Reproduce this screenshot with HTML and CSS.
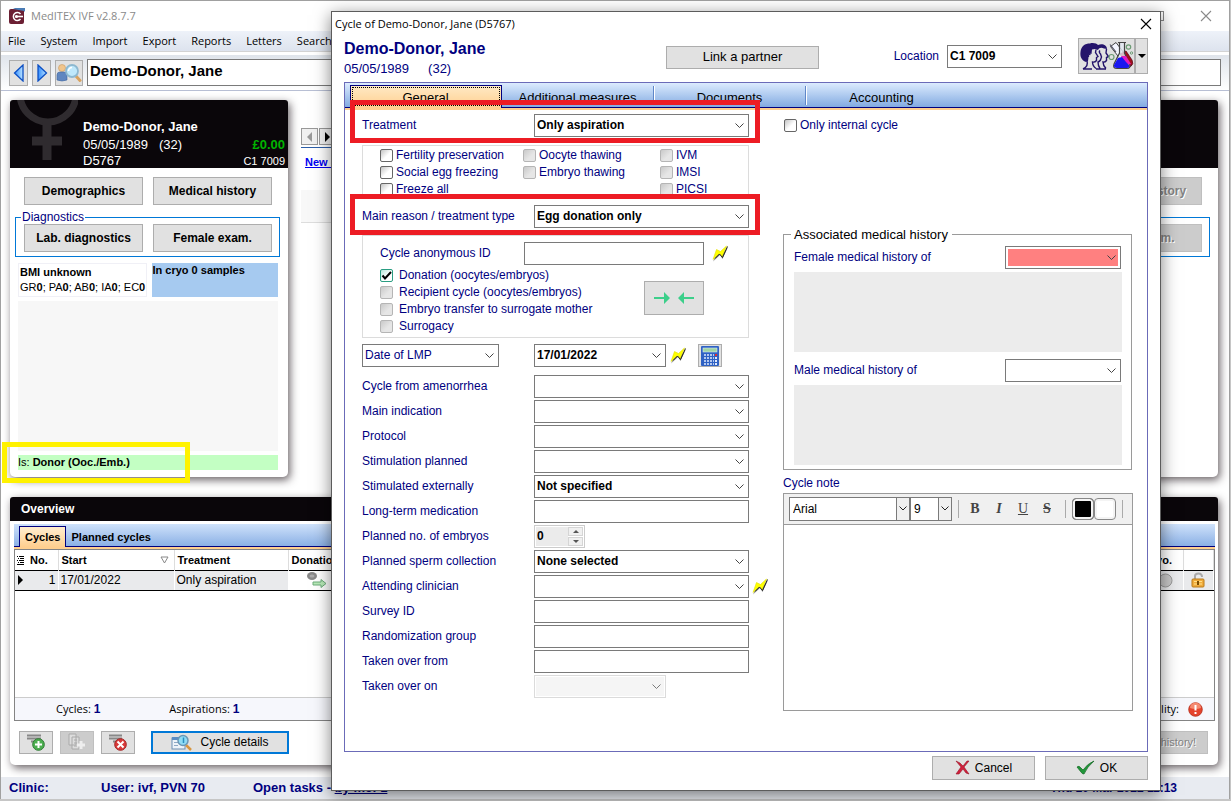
FILE: index.html
```html
<!DOCTYPE html>
<html lang="en">
<head>
<meta charset="utf-8">
<title>MedITEX IVF</title>
<link rel="stylesheet" href="styles.css">
</head>
<body>
<svg class="defs" aria-hidden="true">
  <symbol id="bolt" viewBox="0 0 17 17">
    <path d="M16 2L10.500 14L8 10L1 16.500L6 7.500L9 11Z" fill="#555" opacity=".7"/>
    <path d="M14.500 1L10 12L7.500 8.500L1 14.500L4.500 4.500L8.500 6.500Z" fill="#ffff00" stroke="#e0e000" stroke-width=".6"/>
    <path d="M15.500 1.500L10.500 12.500L7.500 9L3 13.500" fill="none" stroke="#222" stroke-width="1"/>
  </symbol>
  <symbol id="close" viewBox="0 0 12 12"><path d="M1 1L11 11M11 1L1 11" fill="none" stroke="currentColor" stroke-width="1.100"/></symbol>
</svg>

<div class="window">
  <header class="titlebar">
    <svg class="logo" width="16" height="16" viewBox="0 0 16 16"><rect x="0" y="1" width="15" height="15" rx="2" fill="#6b1f33"/><path d="M4 1L6 0H16V4L15 3Z" fill="#4a7cb5"/><path d="M11.500 6A4 4 0 1 0 11.500 11" fill="none" stroke="#fff" stroke-width="1.500"/><path d="M6 8.500H14" stroke="#fff" stroke-width="1.600"/><circle cx="7.500" cy="8.500" r="1.500" fill="#fff"/></svg>
    <span class="title">MedITEX IVF v2.8.7.7</span>
    <svg class="sys" width="10" height="10" viewBox="0 0 10 10"><rect x=".5" y=".5" width="9" height="9" fill="none" stroke="#888"/></svg>
    <svg class="sys" width="12" height="12"><use href="#close"/></svg>
  </header>
  <nav class="menubar">
    <a href="#">File</a><a href="#">System</a><a href="#">Import</a><a href="#">Export</a><a href="#">Reports</a><a href="#">Letters</a><a href="#">Search</a>
  </nav>
  <div class="toolbar">
    <button class="tool" aria-label="Previous"><svg width="12" height="18" viewBox="0 0 12 18"><defs><linearGradient id="bl"><stop offset="0" stop-color="#2f8bff"/><stop offset="1" stop-color="#bfe6ff"/></linearGradient></defs><path d="M10 1V17L1.500 9Z" fill="url(#bl)" stroke="#0b4fc4" stroke-width="1.300"/></svg></button>
    <button class="tool" aria-label="Next"><svg width="12" height="18" viewBox="0 0 12 18"><path d="M2 1V17L10.500 9Z" fill="url(#bl)" stroke="#0b4fc4" stroke-width="1.300"/></svg></button>
    <button class="tool wide" aria-label="Find patient"><svg width="26" height="20" viewBox="0 0 26 20"><circle cx="6" cy="5" r="3.500" fill="#f1c58c" stroke="#c99a5c" stroke-width=".6"/><path d="M1 17V12Q1 9 4 9H8Q11 9 11 12V17Q6 19 1 17Z" fill="#5f86c0" stroke="#3f66a0" stroke-width=".6"/><path d="M19 12L24 17.500" stroke="#d9a35f" stroke-width="3" stroke-linecap="round"/><circle cx="16" cy="8" r="6" fill="#bfe8fb" stroke="#8db8d0" stroke-width="1.800"/><path d="M12.500 8A3.500 3.500 0 0 1 16 4.500" stroke="#fff" stroke-width="1.500" fill="none"/></svg></button>
    <input class="patient-box" type="text" value="Demo-Donor, Jane" aria-label="Patient">
  </div>

  <main class="workspace">
    <div class="top-row">
      <section class="card patient">
        <div class="card-head">
          <svg class="venus" width="68" height="68" viewBox="0 0 68 68"><circle cx="38" cy="-6" r="28" fill="none" stroke="#2f2b2f" stroke-width="7"/><path d="M37 22V60M22 41H52" stroke="#2f2b2f" stroke-width="9" fill="none"/></svg>
          <div class="ident">
            <strong>Demo-Donor, Jane</strong>
            <div class="ident-line"><span>05/05/1989 &nbsp; (32)</span><b class="money">£0.00</b></div>
            <div class="ident-line low"><span>D5767</span><small>C1 7009</small></div>
          </div>
        </div>
        <div class="pair"><button class="btn strong">Demographics</button><button class="btn strong">Medical history</button></div>
        <fieldset class="diag"><legend>Diagnostics</legend>
          <button class="btn strong">Lab. diagnostics</button><button class="btn strong">Female exam.</button>
        </fieldset>
        <div class="facts">
          <div class="bmi"><b>BMI unknown</b><br>GR<b>0</b>; PA<b>0</b>; AB<b>0</b>; IA<b>0</b>; EC<b>0</b></div>
          <div class="cryo">In cryo 0 samples</div>
        </div>
        <div class="memo"></div>
        <div class="donor">Is: <b>Donor (Ooc./Emb.)</b></div>
      </section>
      <section class="timeline">
        <div class="steps">
          <button class="step" aria-label="Back"><svg width="7" height="10"><path d="M6 0V10L1 5Z" fill="#999"/></svg></button>
          <button class="step" aria-label="Forward"><svg width="7" height="10"><path d="M1 0V10L6 5Z" fill="#000"/></svg></button>
        </div>
        <a class="new-link" href="#">New cycle</a>
        <div class="slot"></div>
      </section>
      <section class="card patient partner">
        <div class="card-head"></div>
        <div class="pair"><button class="btn strong" disabled>Demographics</button><button class="btn strong" disabled>Medical history</button></div>
        <fieldset class="diag"><legend>Diagnostics</legend>
          <button class="btn strong" disabled>Lab. diagnostics</button><button class="btn strong" disabled>Male exam.</button>
        </fieldset>
      </section>
    </div>

    <section class="card overview">
      <h2>Overview</h2>
      <div class="grid-area">
        <div class="mini-tabs"><button class="mini-tab active">Cycles</button><button class="mini-tab">Planned cycles</button></div>
        <div class="grid-frame">
          <table class="cycles">
            <colgroup><col class="c-mark"><col class="c-no"><col class="c-start"><col class="c-treat"><col class="c-don"><col><col class="c-cryo"><col class="c-lock"></colgroup>
            <thead><tr><th><svg width="8" height="10" viewBox="0 0 8 10"><path d="M0 1.500H1M2 1.500H7M1 3.500H2M3 3.500H7M0 5.500H1M2 5.500H7M1 7.500H2M3 7.500H7M0 9.500H7" stroke="#000"/></svg></th><th>No.</th><th>Start<svg class="sort" width="9" height="8"><path d="M1 1H8L4.500 7Z" fill="none" stroke="#888"/></svg></th><th>Treatment</th><th>Donation</th><th></th><th class="num">Cryo.</th><th></th></tr></thead>
            <tbody><tr><td><svg width="6" height="10"><path d="M1 0V10L6 5Z"/></svg></td><td class="num">1</td><td>17/01/2022</td><td>Only aspiration</td>
              <td class="don"><svg width="24" height="18" viewBox="0 0 24 18"><ellipse cx="9" cy="5" rx="5" ry="4" fill="#888"/><ellipse cx="9" cy="5" rx="2.500" ry="1.500" fill="#aaa"/><path d="M10 11H18V8.500L23 12.500L18 16.500V14H10Z" fill="#b7eab7" stroke="#6dab7a"/></svg></td><td></td>
              <td class="num"><svg width="15" height="15"><circle cx="7.500" cy="7.500" r="6.500" fill="#c8c8c8" stroke="#999"/></svg></td>
              <td class="lock"><svg width="14" height="16" viewBox="0 0 14 16"><path d="M4 7V4Q4 1.500 7.500 1.500Q11 1.500 11 5" fill="none" stroke="#aaa" stroke-width="2"/><rect x="1" y="7" width="12" height="8" rx="1" fill="#f0ac3c" stroke="#b97a18"/><path d="M3 9.500H11M3 12H11" stroke="#ffe08a"/><path d="M7 9V13" stroke="#7c4d00" stroke-width="2"/></svg></td></tr></tbody>
          </table>
          <div class="totals"><span>Cycles: <b>1</b></span><span>Aspirations: <b>1</b></span><span class="quality">Data quality: <svg width="15" height="15" viewBox="0 0 15 15"><circle cx="7.500" cy="7.500" r="6.800" fill="#e5432c" stroke="#b32a18" stroke-width=".8"/><path d="M2 6A5.500 5.500 0 0 1 13 6Q7.500 8 2 6" fill="#f58a70"/><path d="M7.500 3V8.500M7.500 10V12" stroke="#fff" stroke-width="2"/></svg></span></div>
        </div>
      </div>
      <div class="actions">
        <button class="btn act" aria-label="Add"><svg width="20" height="18" viewBox="0 0 20 18"><path d="M1 2.500H15M1 5.500H15M5 8.500H10" stroke="#888" stroke-width="2"/><circle cx="12.500" cy="11.500" r="5.800" fill="#4caf50" stroke="#2c7a30"/><path d="M12.500 8V15M9 11.500H16" stroke="#fff" stroke-width="2"/></svg></button>
        <button class="btn act" aria-label="Copy" disabled><svg width="20" height="18" viewBox="0 0 20 18"><path d="M2 1H9V12H2ZM5 4H12V16H5Z" fill="#ddd" stroke="#aaa"/><path d="M7 7H10M7 10H10M7 13H10" stroke="#aaa"/><path d="M14 8V16M10 12H18" stroke="#eee" stroke-width="3"/></svg></button>
        <button class="btn act" aria-label="Delete"><svg width="20" height="18" viewBox="0 0 20 18"><path d="M1 2.500H14M1 5.500H14M5 8.500H10" stroke="#888" stroke-width="2"/><circle cx="12.500" cy="11.500" r="5.800" fill="#d93a3a" stroke="#a12323"/><path d="M9.500 8.500L15.500 14.500M15.500 8.500L9.500 14.500" stroke="#fff" stroke-width="2"/></svg></button>
        <button class="btn details"><svg width="22" height="17" viewBox="0 0 22 17"><rect x="1" y="4" width="13" height="11" fill="#eef3f8" stroke="#6d8fb3"/><rect x="1" y="3" width="13" height="3" fill="#5b8dc4"/><path d="M3 8.500H7M3 11.500H7" stroke="#8fa9c4"/><path d="M15 11L20 16" stroke="#d9963f" stroke-width="2.500"/><circle cx="12" cy="6.500" r="5" fill="#8fdcf5" stroke="#6b96b5" stroke-width="1.500"/><path d="M12.500 3.500V9" stroke="#2a8fc0" stroke-width="1.500"/></svg>Cycle details</button>
        <button class="btn history" disabled>Treatment history!</button>
      </div>
    </section>
  </main>

  <footer class="statusbar"><span class="s-clinic">Clinic:</span><span class="s-user">User: ivf, PVN 70</span><span>Open tasks - <a href="#">by me: 1</a></span><time>Thu 10 Mar 2022 11:13</time></footer>
</div>

<div class="dialog" role="dialog" aria-labelledby="dlg-title">
  <div class="dlg-title"><span id="dlg-title">Cycle of Demo-Donor, Jane (D5767)</span><button class="plain" aria-label="Close"><svg width="12" height="12"><use href="#close"/></svg></button></div>
  <div class="dlg-head">
    <div class="dlg-ident"><h1>Demo-Donor, Jane</h1><p><span>05/05/1989</span><span>(32)</span></p></div>
    <button class="btn link">Link a partner</button>
    <div class="location"><label for="loc">Location</label><select id="loc" class="field bold"><option>C1 7009</option></select></div>
    <div class="split">
      <button class="btn main" aria-label="Couple and laboratory"><svg width="54" height="32" viewBox="0 0 54 32">
        <path d="M6 22C1 20 0 16 0.500 12C1 6 5 3.500 10 3.500C13 2.500 17 3.500 18 5C22 3 27 5 27 9L24 8.500C21 7 19 8 18 10L15 9L12 9.500L11.500 14C9 13 7.500 15 8.500 17.500L8 21Z" fill="#24146b"/>
        <path d="M7 21C8 24 7 27 3 29M8.500 17Q8 13.500 10.500 14.500M16 9.500L15.500 12.500L18 16.500L16.500 17.500L16.500 20.500Q15 22.500 12.500 22C12.500 25 14 27 16 28.500M26.500 9L26 13L28.500 16.500L26.500 17.500L26.500 20.500Q25 22.500 23 22C23 25 24.500 27 26 28.500M20 10.500Q18.500 12 20.500 14L21.500 17L20.500 20Q19.500 21.500 18 22Q18 26 20 28.500M3 29H12M16 29H26" fill="none" stroke="#24146b" stroke-width="1.400"/>
        <path d="M30.500 6.500L36 2.500L50 21L52 24Q52 27 48 27L45 25Z" fill="#f4f6ff" stroke="#444"/>
        <path d="M40 14L46 11L52 20Q54 24 51 26L47 25Z" fill="#a3101c" stroke="#5a0d20" stroke-width=".8"/>
        <path d="M38 2.500H46M39.500 2.500V13L34 24Q32.500 28.500 37 28.500H47Q51 28.500 49.500 24L44.500 13V2.500" fill="#e4e8f2" fill-opacity=".8" stroke="#444" stroke-width="1.200"/>
        <path d="M41 16L46 16L51 24L46 25Z" fill="#e51cc0"/>
        <path d="M38 18L34 25Q33.500 28 37 28H47Q50 28 49 25L46 22L42 17Z" fill="#1a18f0"/>
        <path d="M30 4.500L36 12" stroke="#556" stroke-width="1.200"/>
        <circle cx="31.500" cy="17" r="2.500" fill="none" stroke="#6c9c74" stroke-width="1.200"/><circle cx="48.500" cy="7" r="2.200" fill="none" stroke="#6c9c74" stroke-width="1.200"/><circle cx="51.500" cy="13" r="1.200" fill="none" stroke="#6c9c74"/></svg></button>
      <button class="btn drop" aria-label="More"><svg width="8" height="4"><path d="M0 0H8L4 4Z"/></svg></button>
    </div>
  </div>

  <div class="page">
    <div class="tabs" role="tablist"><button class="tab active" role="tab">General</button><button class="tab" role="tab">Additional measures</button><button class="tab" role="tab">Documents</button><button class="tab" role="tab">Accounting</button></div>
    <div class="cols">
      <form class="left">
        <div class="row marked"><label for="treat">Treatment</label><select id="treat" class="field bold"><option>Only aspiration</option></select></div>
        <div class="box options">
          <label class="check"><input type="checkbox">Fertility preservation</label><label class="check"><input type="checkbox" disabled>Oocyte thawing</label><label class="check"><input type="checkbox" disabled>IVM</label>
          <label class="check"><input type="checkbox">Social egg freezing</label><label class="check"><input type="checkbox" disabled>Embryo thawing</label><label class="check"><input type="checkbox" disabled>IMSI</label>
          <label class="check"><input type="checkbox">Freeze all</label><span></span><label class="check"><input type="checkbox" disabled>PICSI</label>
        </div>
        <div class="row marked"><label for="reason">Main reason / treatment type</label><select id="reason" class="field bold"><option>Egg donation only</option></select></div>
        <div class="box donation">
          <div class="anon"><label for="anon">Cycle anonymous ID</label><input id="anon" class="field" type="text"><svg width="17" height="17"><use href="#bolt"/></svg></div>
          <div class="kind">
            <div class="kinds">
              <label class="check"><input type="checkbox" checked>Donation (oocytes/embryos)</label>
              <label class="check"><input type="checkbox" disabled>Recipient cycle (oocytes/embryos)</label>
              <label class="check"><input type="checkbox" disabled>Embryo transfer to surrogate mother</label>
              <label class="check"><input type="checkbox" disabled>Surrogacy</label>
            </div>
            <button type="button" class="btn arrows" aria-label="Match"><svg width="42" height="14" viewBox="0 0 42 14"><path d="M1 7H12M41 7H30" stroke="#3ccf8a" stroke-width="2"/><path d="M11 1L17 7L11 13ZM31 1L25 7L31 13Z" fill="#3ccf8a"/></svg></button>
          </div>
        </div>
        <div class="row lmp"><select class="field lmp-kind" aria-label="Date kind"><option>Date of LMP</option></select>
          <div class="lmp-date"><input class="field bold picker" type="text" value="17/01/2022" aria-label="Date"><svg width="17" height="17"><use href="#bolt"/></svg>
          <button type="button" class="btn calc" aria-label="Calculator"><svg width="18" height="20" viewBox="0 0 18 20"><rect width="18" height="20" rx="1" fill="#2f62c4"/><rect x="2" y="2" width="14" height="4" fill="#9fd3a4" stroke="#d6e6f5" stroke-width=".6"/><path d="M3 9H13M3 12H13M3 15H13M3 18H13" stroke="#dfe9fb" stroke-width="1.600" stroke-dasharray="2 1"/><rect x="14" y="8" width="2" height="2" fill="#e03030"/><path d="M15 11V19" stroke="#dfe9fb" stroke-width="2" stroke-dasharray="2 1"/></svg></button></div></div>
        <div class="rows">
          <div class="row"><label for="f1">Cycle from amenorrhea</label><select id="f1" class="field"><option></option></select></div>
          <div class="row"><label for="f2">Main indication</label><select id="f2" class="field"><option></option></select></div>
          <div class="row"><label for="f3">Protocol</label><select id="f3" class="field"><option></option></select></div>
          <div class="row"><label for="f4">Stimulation planned</label><select id="f4" class="field"><option></option></select></div>
          <div class="row"><label for="f5">Stimulated externally</label><select id="f5" class="field bold"><option>Not specified</option></select></div>
          <div class="row"><label for="f6">Long-term medication</label><input id="f6" class="field" type="text"></div>
          <div class="row"><label for="f7">Planned no. of embryos</label><div class="spin"><input id="f7" type="text" value="0" disabled><div class="spin-btns"><button type="button" disabled aria-label="Up"><svg width="6" height="3"><path d="M0 3H6L3 0Z" fill="#555"/></svg></button><button type="button" disabled aria-label="Down"><svg width="6" height="3"><path d="M0 0H6L3 3Z" fill="#555"/></svg></button></div></div></div>
          <div class="row"><label for="f8">Planned sperm collection</label><select id="f8" class="field bold"><option>None selected</option></select></div>
          <div class="row"><label for="f9">Attending clinician</label><select id="f9" class="field"><option></option></select><svg width="17" height="17"><use href="#bolt"/></svg></div>
          <div class="row"><label for="f10">Survey ID</label><input id="f10" class="field" type="text"></div>
          <div class="row"><label for="f11">Randomization group</label><input id="f11" class="field" type="text"></div>
          <div class="row"><label for="f12">Taken over from</label><input id="f12" class="field" type="text"></div>
          <div class="row"><label for="f13">Taken over on</label><select id="f13" class="field short" disabled><option></option></select></div>
        </div>
      </form>
      <div class="right">
        <label class="check internal"><input type="checkbox">Only internal cycle</label>
        <fieldset class="assoc"><legend>Associated medical history</legend>
          <div class="hist"><label for="fem">Female medical history of</label><select id="fem" class="field alert"><option></option></select></div>
          <textarea aria-label="Female medical history" readonly></textarea>
          <div class="hist"><label for="mal">Male medical history of</label><select id="mal" class="field"><option></option></select></div>
          <textarea aria-label="Male medical history" readonly></textarea>
        </fieldset>
        <label class="note-label" for="note">Cycle note</label>
        <div class="editor">
          <div class="ed-bar">
            <select class="ed-sel font" aria-label="Font"><option>Arial</option></select><select class="ed-sel size" aria-label="Size"><option>9</option></select>
            <i class="sep"></i>
            <button class="fmt"><b>B</b></button><button class="fmt"><b><em>I</em></b></button><button class="fmt"><u>U</u></button><button class="fmt"><b><s>S</s></b></button>
            <i class="sep"></i>
            <button class="swatch black" aria-label="Text colour"></button><button class="swatch" aria-label="Background colour"></button>
            <i class="sep"></i>
          </div>
          <textarea id="note"></textarea>
        </div>
      </div>
    </div>
  </div>
  <div class="dlg-foot">
    <button class="btn foot"><svg width="15" height="15" viewBox="0 0 15 15"><path d="M1 1L5 3L8 6L12 1L14 1L9 7L14 14L11 13L8 9L4 14L1 14L6 7Z" fill="#d0203c" stroke="#971427" stroke-width=".6"/></svg>Cancel</button>
    <button class="btn foot"><svg width="19" height="15" viewBox="0 0 19 15"><path d="M1 7Q3 5 5 8L7 10Q11 4 18 1Q11 7 8 14Q6 14 5 12Z" fill="#20963a" stroke="#10661f" stroke-width=".7"/></svg>OK</button>
  </div>
</div>
</body>
</html>
```
FILE: styles.css
```css
*, *::before, *::after { box-sizing: border-box; }
html, body { height: 100%; }
body { margin: 0; position: relative; overflow: hidden; background: #c6c6c6; color: #000; font: 12px/16px "Liberation Sans", Arial, sans-serif; }
button, input, select, textarea { font: inherit; color: inherit; margin: 0; border-radius: 0; }
h1, h2, p { margin: 0; font-size: inherit; }
svg { display: block; flex: none; }
.defs { position: absolute; width: 0; height: 0; }

.btn { display: flex; align-items: center; justify-content: center; padding: 0 0 1px; background: #e1e1e1; border: 1px solid #adadad; }
.btn:disabled { background: #ccc; border-color: #bfbfbf; color: #838383; text-shadow: 1px 1px #fff; }
.strong { font-weight: bold; }
.plain { border: 0; background: none; padding: 0; }

/* application window */
.window { height: calc(100% - 2px); margin-right: 1px; display: flex; flex-direction: column; border: 1px solid #a0a0a0; border-bottom: 0; background: #fff; }
.titlebar { flex: none; height: 30px; display: flex; align-items: center; gap: 6px; padding: 0 17px 0 8px; color: #8a8a8a; font: 11px/16px "Open Sans", sans-serif; }
.title { margin-right: auto; }
.sys { margin-left: 30px; }
.menubar { flex: none; height: 21px; display: flex; gap: 15px; padding-left: 7px; font: 11px/20px "Open Sans", sans-serif; background: linear-gradient(#eef2f9, #dde3ee); border-bottom: 1px solid #d3d3d3; }
.menubar a { color: #000; text-decoration: none; }
.toolbar { flex: none; height: 36px; margin-top: 3px; display: flex; align-items: center; gap: 4px; padding: 0 8px; background: linear-gradient(#dfe4eb, #fff); border-bottom: 1px solid #b8bfd4; }
.tool { width: 19px; height: 26px; padding: 0; display: flex; align-items: center; justify-content: center; background: #e1e1e1; border: 1px solid #adadad; }
.wide { width: 28px; }
.patient-box { flex: 1; height: 27px; padding: 0 2px 4px; border: 1px solid #7a7a7a; font-weight: bold; font-size: 15px; background: #fff; }

.workspace { flex: 1; min-height: 0; display: flex; flex-direction: column; gap: 20px; padding: 9px 11px 12px 9px; }
.top-row { display: flex; gap: 13px; }
.card { background: #fff; border-radius: 3px 3px 5px 5px; box-shadow: 2px 3px 8px rgba(40, 30, 35, .7); }
.patient { flex: none; width: 278px; height: 377px; display: flex; flex-direction: column; }
.card-head { flex: none; height: 68px; position: relative; display: flex; padding: 18px 3px 0 73px; background: #0a060a; color: #fff; border-radius: 3px 3px 0 0; overflow: hidden; }
.venus { position: absolute; left: 0; top: 0; }
.ident { flex: 1; font-size: 13px; line-height: 18px; position: relative; }
.ident strong { display: block; }
.ident-line { display: flex; justify-content: space-between; }
.low { line-height: 14px; }
.low small { font-size: 11px; }
.money { color: #00b400; }
.pair { display: flex; gap: 10px; padding: 9px 16px 5px 14px; }
.pair .btn, .diag .btn { flex: 1; height: 28px; }
.diag { display: flex; gap: 10px; margin: 0 8px 0 5px; padding: 0 7px 4px 8px; border: 1px solid #0078d7; min-width: 0; }
.diag legend { margin-left: -3px; padding: 0 1px; color: #00007f; line-height: 14px; }
.facts { display: flex; gap: 5px; margin: 6px 10px 0 8px; font-size: 11px; line-height: 15px; }
.facts > div { flex: 1; height: 34px; white-space: nowrap; }
.bmi { border: 1px solid #f0f0f6; padding: 1px 0 0 1px; }
.cryo { background: #a6caf0; font-weight: bold; padding-left: 1px; }
.memo { flex: 1; margin: 4px 10px 4px 8px; background: #f7f7f7; }
.donor { position: relative; margin: 0 10px 7px 8px; background: #c3ffc3; font-size: 11px; line-height: 15px; }
.donor::after { content: ""; position: absolute; left: -16px; top: -13px; width: 188px; height: 41px; border: 5px solid #fff200; }

.timeline { flex: 1; min-width: 0; padding-top: 28px; }
.steps { display: flex; gap: 1px; padding-bottom: 2px; border-bottom: 1px solid #2d5fa8; }
.step { width: 17px; height: 17px; padding: 0; display: flex; align-items: center; justify-content: center; background: #f0f0f0; border: 1px solid #999; }
.new-link { display: block; margin: 6px 4px 20px; color: #0000f0; font-weight: bold; font-size: 11px; }
.slot { height: 33px; background: #f8f8f8; border-bottom: 1px solid #ddd; }

.overview { flex: 1; min-height: 0; display: flex; flex-direction: column; }
.overview h2 { flex: none; height: 24px; padding-left: 11px; background: #0a060a; color: #fff; line-height: 25px; border-radius: 3px 3px 0 0; }
.grid-area { flex: 1; display: flex; flex-direction: column; margin: 3px 3px 0 4px; }
.mini-tabs { flex: none; display: flex; height: 25px; padding: 2px 0 0 5px; background: linear-gradient(#cfe2fb, #88aee4); border-bottom: 2px solid #ffcf8f; box-shadow: inset 0 -1px #00007f; }
.mini-tab { padding: 0 5px; border: 0; background: none; font-weight: bold; font-size: 11px; }
.mini-tab.active { background: linear-gradient(#ffeed0, #ffcf8f); border: 1px solid #00007f; border-bottom: 0; }
.grid-frame { flex: 1; display: flex; flex-direction: column; border: 1px solid #848484; }
.cycles { width: 100%; table-layout: fixed; border-collapse: collapse; }
.c-mark { width: 12px; } .c-no { width: 31px; } .c-start { width: 116px; } .c-treat { width: 114px; } .c-don { width: 60px; } .c-cryo { width: 60px; } .c-lock { width: 30px; }
.cycles th { height: 20px; padding: 0 3px; text-align: left; font-size: 11px; white-space: nowrap; border-right: 1px solid #ddd; }
.cycles th:first-child, .cycles td:first-child { padding: 0 0 0 2px; border-right: 0; }
.cycles td { height: 20px; padding: 0 2px; background: #e9eaec; border-top: 1px solid #000; border-bottom: 1px solid #000; border-right: 1px solid #fff; }
.cycles .num { text-align: right; }
.cycles th.num { padding-right: 11px; }
.cycles .num svg { margin-left: auto; margin-right: 8px; }
.cycles td.don { background: #fff; padding-left: 14px; }
.cycles td.lock { padding-left: 7px; }
.sort { float: right; margin: 4px 2px 0 0; }
.totals { margin-top: auto; height: 23px; display: flex; align-items: center; padding: 0 11px 0 41px; gap: 69px; background: #f6f7fc; border-top: 1px solid #ccc; font: 11px/16px "Open Sans", sans-serif; }
.totals b { font: bold 12px "Liberation Sans", sans-serif; color: #00007f; }
.quality { margin-left: auto; display: flex; gap: 9px; align-items: center; }
.actions { flex: none; display: flex; align-items: center; gap: 7px; padding: 10px 10px 11px 9px; }
.act { width: 34px; height: 23px; }
.details { width: 138px; height: 23px; gap: 7px; margin-left: 9px; border: 2px solid #0078d7; }
.history { margin-left: auto; width: 112px; height: 23px; font-size: 11px; }

.statusbar { flex: none; height: 22px; display: flex; padding: 0 52px 0 8px; background: #e8ebf1; color: #00007f; font-weight: bold; font-size: 13px; line-height: 22px; }
.statusbar a { color: inherit; }
.statusbar time { margin-left: auto; font-size: 12px; }
.s-clinic { width: 92px; } .s-user { width: 152px; }

/* dialog */
.dialog { position: absolute; left: 331px; right: 70px; top: 11px; bottom: 10px; display: flex; flex-direction: column; background: #fff; border: 1px solid #5c5c5c; box-shadow: 0 4px 16px rgba(0, 0, 0, .5); color: #00007f; }
.dlg-title { flex: none; height: 24px; display: flex; justify-content: space-between; align-items: center; padding: 0 8px 0 3px; color: #000; font: 11px/16px "Open Sans", sans-serif; }
.dlg-head { flex: none; height: 46px; display: flex; align-items: flex-start; padding: 0 12px; }
.dlg-ident { width: 322px; padding-top: 3px; }
.dlg-ident h1 { font-size: 16px; line-height: 20px; }
.dlg-ident p { display: flex; gap: 19px; padding: 1px 0; font-size: 13px; line-height: 18px; }
.link { width: 153px; height: 23px; margin-top: 10px; font-size: 13px; color: #000; }
.location { margin: 9px 16px 0 auto; display: flex; align-items: center; gap: 8px; }
.location .field { width: 115px; }
.split { display: flex; height: 36px; margin-top: 2px; }
.main { width: 58px; border-right-width: 2px; }
.drop { width: 12px; border-left: 0; }

.field { width: 100%; min-width: 0; height: 23px; padding: 0 2px 1px; border: 1px solid #7a7a7a; background-color: #fff; appearance: none; }
select.field, .picker { padding-right: 18px; background-repeat: no-repeat; background-position: right 4px center; background-image: url("data:image/svg+xml,%3Csvg xmlns='http://www.w3.org/2000/svg' width='9' height='6'%3E%3Cpath d='M.5 .5L4.500 4.500L8.500 .5' fill='none' stroke='%23444'/%3E%3C/svg%3E"); }
select.field:disabled { background-color: #f2f2f2; border-color: #ccc; box-shadow: inset 0 0 0 1px #fff; }
.bold { font-weight: bold; color: #000; }

.page { flex: 1; min-height: 0; margin: 0 12px; display: flex; flex-direction: column; border: 1px solid #6b6bb8; }
.tabs { flex: none; display: flex; height: 27px; padding: 2px 0 0 5px; background: linear-gradient(#dcebfe, #7fa8e0); border-bottom: 2px solid #ffcf8f; box-shadow: inset 0 -1px #00007f; }
.tab { position: relative; width: 152px; padding: 3px 1px 0 0; border: 0; background: none; font-size: 13px; line-height: 16px; color: #000; }
.tab:nth-child(n+2):nth-child(-n+3)::after { content: ""; position: absolute; right: -1px; top: 1px; height: 19px; border-left: 1px solid #5f87c8; border-right: 1px solid #fff; }
.tab.active { background: linear-gradient(#ffe9c4, #ffcf8f); border: 1px solid #00007f; border-bottom: 0; outline: 1px dotted #000; outline-offset: -3px; padding-top: 2px; }
.cols { flex: 1; min-height: 0; display: grid; grid-template-columns: minmax(0, 407fr) minmax(0, 350fr); gap: 14px; padding: 0 14px 0 17px; }
.left { padding-top: 4px; }
.row { position: relative; display: grid; grid-template-columns: 172px minmax(0, 1fr) 20px; align-items: center; min-height: 23px; }
.row > label, .anon > label, .hist > label, .location > label { padding-bottom: 2px; }
.row > svg { margin-left: 3px; }
.marked { z-index: 1; }
.marked::after { content: ""; position: absolute; left: -12px; right: 9px; top: -14px; bottom: -6px; border: 5px solid #ed1c24; pointer-events: none; }
.box + .marked::after { top: -11px; bottom: -7px; }
.box { margin-right: 20px; border: 1px solid #dcdcdc; }
.options { margin-top: 8px; margin-bottom: 6px; padding: 1px 0 0 17px; display: grid; grid-template-columns: 143px 137px 1fr; }
.check { display: flex; align-items: center; height: 17px; line-height: 14px; gap: 3px; padding-bottom: 1px; white-space: nowrap; }
.check input { appearance: none; flex: none; width: 13px; height: 13px; border: 1px solid #666; border-radius: 2px; background: linear-gradient(135deg, #c4c4c4, #fff 55%); }
.check input:disabled { border-color: #b5b5b5; background: linear-gradient(135deg, #c9c9c9, #e6e6e6 60%); }
.check input:checked { border-color: #2a9d82; background: url("data:image/svg+xml,%3Csvg xmlns='http://www.w3.org/2000/svg' width='11' height='11'%3E%3Cpath d='M1.500 5.500L4 8.500L10 2' fill='none' stroke='%23000' stroke-width='2'/%3E%3C/svg%3E") no-repeat, linear-gradient(135deg, #b8e6da, #fff 60%); }
.donation { margin-top: 7px; padding: 6px 19px 2px 17px; }
.anon { display: grid; grid-template-columns: 144px minmax(0, 1fr) 17px; align-items: center; }
.anon .field { width: calc(100% - 8px); }
.kind { display: flex; justify-content: space-between; padding-right: 25px; }
.kinds { padding-top: 2px; }
.kinds .check { gap: 6px; }
.arrows { width: 60px; height: 34px; margin-top: 16px; }
.lmp { margin-top: 6px; }
.lmp-kind { width: 137px; }
.lmp-date { display: flex; align-items: center; }
.lmp-date .field { width: 132px; }
.lmp-date svg { margin-left: 4px; }
.calc { width: 24px; height: 23px; margin-left: 11px; padding: 0; }
.calc svg { margin: 0; }
.rows { display: grid; gap: 2px; margin-top: 8px; }
.short { width: 132px; }
.spin { width: 51px; height: 23px; display: flex; padding: 1px; border: 1px solid #ccc; }
.spin input { width: 32px; padding: 0 0 2px 1px; border: 0; background: #ebebeb; color: #000; font-weight: bold; }
.spin-btns { flex: 1; display: grid; gap: 1px; }
.spin-btns button { padding: 0; display: flex; align-items: center; justify-content: center; border: 1px solid #d5d5d5; background: #f0f0f0; }

.right { min-height: 0; display: flex; flex-direction: column; padding: 7px 0 40px; }
.internal { padding-left: 1px; }
.assoc { margin: 93px 1px 0 0; padding: 4px 9px 4px 10px; min-width: 0; border: 1px solid #9a9a9a; }
.assoc legend { padding: 0 4px 0 3px; margin-left: -3px; color: #000; font-size: 13px; line-height: 15px; }
.hist { display: flex; justify-content: space-between; align-items: center; }
.hist .field { width: 116px; margin-right: 1px; }
.field.alert { background-color: #ff8080; box-shadow: inset 0 0 0 2px #fff; }
.assoc textarea { display: block; width: 100%; height: 80px; margin: 3px 0 7px; border: 0; background: #ececec; resize: none; }
.assoc textarea:last-child { margin-bottom: 0; }
.note-label { margin: 5px 0 2px; }
.editor { flex: 1; min-height: 0; display: flex; flex-direction: column; border: 1px solid #9a9a9a; }
.ed-bar { flex: none; height: 31px; display: flex; align-items: center; padding-left: 5px; background: #f0f0f0; border-bottom: 1px solid #9a9a9a; }
.ed-sel { height: 24px; padding: 0 14px 1px 3px; border: 1px solid #7a7a7a; color: #000; appearance: none; background: url("data:image/svg+xml,%3Csvg xmlns='http://www.w3.org/2000/svg' width='13' height='24'%3E%3Cpath d='M0 0H13V24H0Z' fill='%23f0f0f0'/%3E%3Cpath d='M.5 0V24' stroke='%237a7a7a'/%3E%3Cpath d='M3.500 9.500L7 13L10.500 9.500' fill='none' stroke='%23222'/%3E%3C/svg%3E") no-repeat right center #fff; }
.font { width: 121px; } .size { width: 42px; }
.sep { width: 1px; height: 18px; margin: 0 6px; background: #aaa; }
.sep + .fmt { margin-left: -2px; }
.fmt { width: 24px; height: 24px; padding: 0; border: 0; background: none; color: #444; font: 14px "Liberation Serif", serif; }
.swatch { width: 22px; height: 22px; padding: 0; border: 1px solid #888; border-radius: 4px; background: #fff; box-shadow: inset 0 0 0 2px #f4f4f4; }
.black { background: #000; }
.editor textarea { flex: 1; border: 0; resize: none; background: #fff; }

.dlg-foot { flex: none; display: flex; justify-content: flex-end; gap: 10px; padding: 4px 12px 10px; color: #000; }
.foot { width: 103px; height: 24px; gap: 5px; }
```
